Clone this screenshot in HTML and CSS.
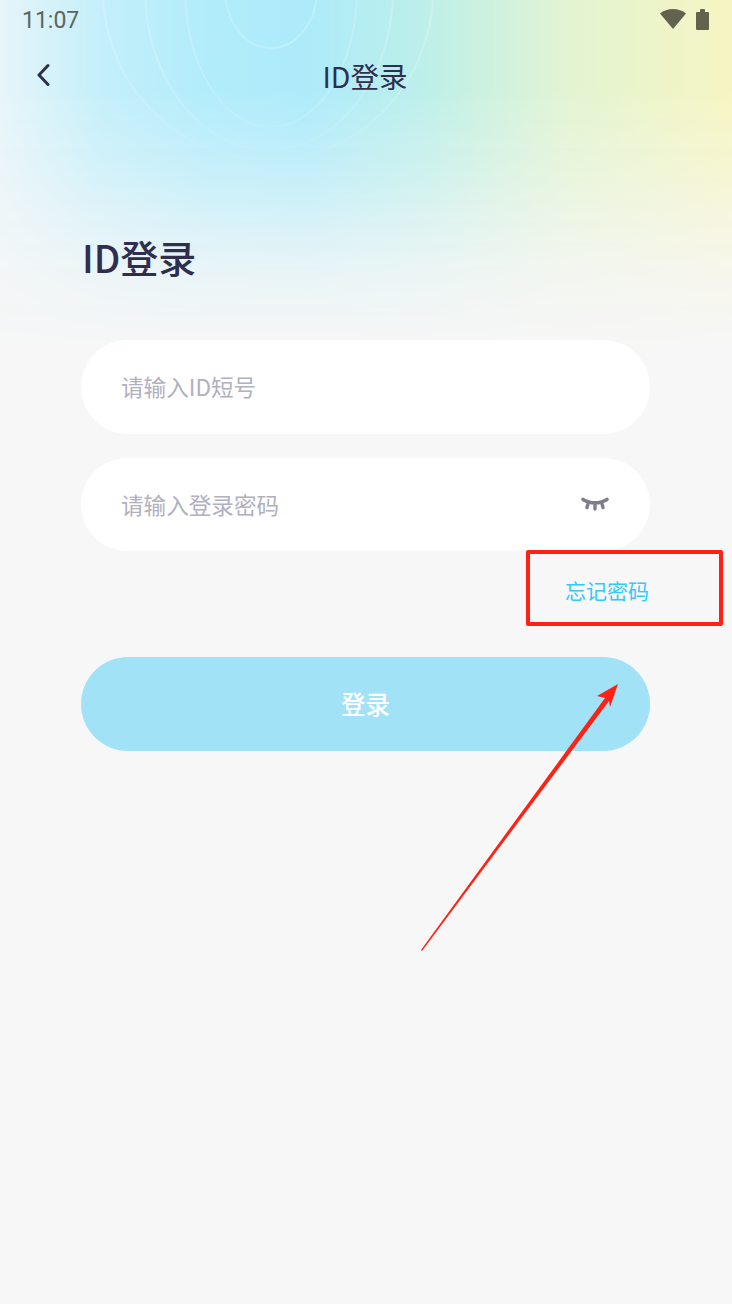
FILE: index.html
```html
<!DOCTYPE html>
<html lang="zh-CN">
<head>
    <meta charset="UTF-8">
    <meta name="viewport" content="width=device-width, initial-scale=1.0">
    <title>ID登录</title>
    <link rel="stylesheet" href="styles.css">
</head>
<body>
    <div class="page">
        <div class="backdrop"></div>
        <svg class="rings" width="732" height="300" viewBox="0 0 732 300" fill="none">
            <ellipse cx="271" cy="-10" rx="46" ry="58"/>
            <ellipse cx="271" cy="-10" rx="86" ry="137"/>
            <ellipse cx="269" cy="-10" rx="124" ry="160"/>
            <ellipse cx="268" cy="-10" rx="165" ry="170"/>
        </svg>

        <div class="status-bar">
            <span class="time">11:07</span>
            <div class="status-icons">
                <svg width="26" height="20" viewBox="0 0 26 20"><path d="M0 4.500C3.500 1.500 8 0 13 0s9.500 1.500 13 4.500L13 20z" fill="#62634f"/></svg>
                <svg width="13" height="21" viewBox="0 0 13 21"><path d="M4 1a1 1 0 0 1 1-1h3a1 1 0 0 1 1 1v2h3a1 1 0 0 1 1 1v16a1 1 0 0 1-1 1H1a1 1 0 0 1-1-1V4a1 1 0 0 1 1-1h3z" fill="#62634f"/></svg>
            </div>
        </div>

        <div class="nav-bar">
            <svg class="back" width="14" height="24" viewBox="0 0 14 24" fill="none"><path d="M12 2.500 3 12l9 9.500" stroke="#2f2e4d" stroke-width="3" stroke-linecap="round" stroke-linejoin="round"/></svg>
            <span class="nav-title">ID登录</span>
        </div>

        <div class="form">
            <h1 class="heading">ID登录</h1>
            <div class="field">请输入ID短号</div>
            <div class="field field-password">
                <span>请输入登录密码</span>
                <svg width="30" height="16" viewBox="0 0 30 16" fill="none" stroke="#7f7e90" stroke-linecap="round"><path d="M3 3.500C10 8 20 8 27 3.500" stroke-width="3.600"/><path d="M8 8 7 11.500M15 9v4M22 8l1 3.500" stroke-width="3.400"/></svg>
            </div>
            <div class="forgot-row"><span class="forgot">忘记密码</span></div>
            <div class="login-button">登录</div>
        </div>

        <div class="mark-box"></div>
        <svg class="mark-arrow" width="732" height="1304" viewBox="0 0 732 1304">
            <path d="M421 950 422 951 609 701 610 707 618 684 597 696 605 698z" fill="#ff2114"/>
        </svg>
    </div>
</body>
</html>
```

FILE: styles.css
```css
* {
    box-sizing: border-box;
}
html, body {
    margin: 0;
    padding: 0;
}
body {
    font-family: "Noto Sans CJK SC", Roboto, sans-serif;
    background: #f7f7f7;
}
.page {
    position: relative;
    width: 732px;
    height: 1304px;
    overflow: hidden;
    background: #f7f7f7;
}
.backdrop {
    position: absolute;
    left: 0;
    top: 0;
    width: 732px;
    height: 360px;
    background: linear-gradient(90deg, #e6f5f9 0, #c4effa 14%, #b2ecfb 28%, #adebfa 42%, #bdefea 58%, #e3f4d2 78%, #f6f5c2 100%);
    -webkit-mask-image: linear-gradient(180deg, #000 0, #000 90px, rgba(0, 0, 0, 0.7) 170px, rgba(0, 0, 0, 0.2) 270px, transparent 350px);
    mask-image: linear-gradient(180deg, #000 0, #000 90px, rgba(0, 0, 0, 0.7) 170px, rgba(0, 0, 0, 0.2) 270px, transparent 350px);
}
.rings {
    position: absolute;
    left: 0;
    top: 0;
    -webkit-mask-image: linear-gradient(180deg, #000 0, #000 60px, transparent 190px);
    mask-image: linear-gradient(180deg, #000 0, #000 60px, transparent 190px);
}
.rings ellipse {
    stroke: #fff;
    stroke-opacity: 0.2;
    stroke-width: 2;
}
.status-bar {
    position: relative;
    height: 40px;
    padding: 0 23px 0 22px;
    display: flex;
    justify-content: space-between;
    align-items: center;
}
.time {
    font-family: Roboto, sans-serif;
    font-size: 23px;
    color: #5f6360;
}
.status-icons {
    display: flex;
    align-items: center;
    gap: 10px;
    margin-top: -2px;
}
.status-icons svg {
    display: block;
}
.nav-bar {
    position: relative;
    height: 74px;
    display: flex;
    align-items: center;
    justify-content: center;
}
.back {
    position: absolute;
    left: 36px;
    top: 23px;
}
.nav-title {
    font-size: 28.500px;
    color: #2f2e4d;
    margin: -3px 2px 0 0;
}
.form {
    position: relative;
    margin: 0 82px 0 81px;
}
.heading {
    margin: 115px 0 0 1px;
    height: 111px;
    line-height: 56px;
    font-size: 38px;
    font-weight: 500;
    color: #2f2e4d;
}
.field {
    height: 93.500px;
    margin-bottom: 24px;
    padding: 0 40px;
    border-radius: 47px;
    background: #fff;
    display: flex;
    align-items: center;
    justify-content: space-between;
    font-size: 22.600px;
    color: #b1b0c0;
}
.field-password {
    margin-bottom: 0;
}
.forgot-row {
    height: 106px;
    padding: 25px 1px 0 0;
    display: flex;
    justify-content: flex-end;
}
.forgot {
    font-size: 21px;
    line-height: 28px;
    color: #35c8fb;
}
.login-button {
    height: 93.500px;
    border-radius: 47px;
    background: #a1e2f7;
    display: flex;
    align-items: center;
    justify-content: center;
    font-size: 24.500px;
    font-weight: 500;
    color: #fff;
}
.mark-box {
    position: absolute;
    left: 526px;
    top: 550px;
    width: 197px;
    height: 76px;
    border: 4px solid #ff2114;
    border-radius: 2px;
}
.mark-arrow {
    position: absolute;
    left: 0;
    top: 0;
}
```
